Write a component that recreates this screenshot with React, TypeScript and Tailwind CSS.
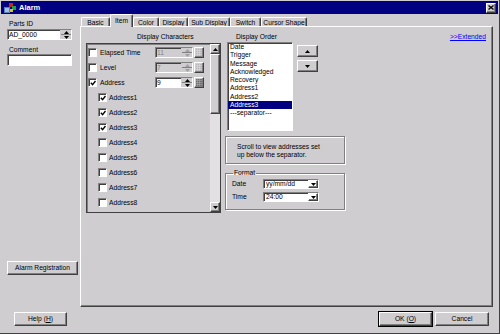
const raised =
  "border border-t-white border-l-white border-r-[#404040] border-b-[#404040] shadow-[inset_-1px_-1px_0_#808080]";
const sunken =
  "border border-t-[#808080] border-l-[#808080] border-r-white border-b-white shadow-[inset_1px_1px_0_#404040]";
const etched = "border border-[#808080] shadow-[inset_1px_1px_0_#fff,1px_1px_0_#fff]";

function Tri({ down = false, color = "#000" }: { down?: boolean; color?: string }) {
  return (
    <svg width="5" height="3" viewBox="0 0 5 3" className="block">
      <polygon points={down ? "0,0 5,0 2.5,3" : "0,3 5,3 2.5,0"} fill={color} />
    </svg>
  );
}

function Check({ on }: { on: boolean }) {
  return (
    <div className={`${sunken} w-[9px] h-[9px] bg-white flex items-center justify-center shrink-0`}>
      {on && (
        <svg width="6" height="6" viewBox="0 0 7 7" className="block">
          <path d="M1 3.2 L3 5.4 L6.4 1.2" stroke="#000" strokeWidth="1.6" fill="none" />
        </svg>
      )}
    </div>
  );
}

function Spin({ disabled = false }: { disabled?: boolean }) {
  const c = disabled ? "#a0a0a0" : "#000";
  return (
    <div className="w-[11px] h-full flex flex-col border-l border-[#cfcdd0] bg-[#cfcdd0]">
      <div className="flex-1 flex items-center justify-center border-b border-[#808080]">
        <Tri color={c} />
      </div>
      <div className="flex-1 flex items-center justify-center">
        <Tri down color={c} />
      </div>
    </div>
  );
}

function GridBtn({ disabled = false }: { disabled?: boolean }) {
  const bg = disabled ? "#b8b6b8" : "#707070";
  const ln = disabled ? "#dddbdd" : "#a8a8a8";
  return (
    <div className={`${raised} w-[10px] h-[11px] flex items-center justify-center ml-[1px]`}>
      <svg width="6" height="7" viewBox="0 0 6 7" className="block">
        <rect width="6" height="7" fill={bg} />
        {[1.5, 3.5].map((x) => (
          <line key={"v" + x} x1={x} y1="0" x2={x} y2="7" stroke={ln} strokeWidth="0.6" />
        ))}
        {[1.5, 3.5, 5.5].map((y) => (
          <line key={"h" + y} x1="0" y1={y} x2="6" y2={y} stroke={ln} strokeWidth="0.6" />
        ))}
      </svg>
    </div>
  );
}

const topRows = [
  { label: "Elapsed Time", on: false, value: "11", enabled: false },
  { label: "Level", on: false, value: "7", enabled: false },
  { label: "Address", on: true, value: "9", enabled: true },
];

const subRows: [string, boolean][] = [
  ["Address1", true],
  ["Address2", true],
  ["Address3", true],
  ["Address4", false],
  ["Address5", false],
  ["Address6", false],
  ["Address7", false],
  ["Address8", false],
];

const orderItems = [
  "Date",
  "Trigger",
  "Message",
  "Acknowledged",
  "Recovery",
  "Address1",
  "Address2",
  "Address3",
  "---separator---",
];

const tabs = [
  { name: "Basic", w: "w-[29px]" },
  { name: "Item", w: "w-[23px]" },
  { name: "Color", w: "w-[26px]" },
  { name: "Display", w: "w-[29px]" },
  { name: "Sub Display", w: "w-[42px]" },
  { name: "Switch", w: "w-[31px]" },
  { name: "Cursor Shape", w: "w-[46px]" },
];

function Combo({ value }: { value: string }) {
  return (
    <div className={`${sunken} bg-white w-[56px] h-[10px] flex items-center`}>
      <span className="pl-[2px] flex-1 leading-[8px]">{value}</span>
      <div className={`${raised} w-[10px] h-full flex items-center justify-center`}>
        <Tri down />
      </div>
    </div>
  );
}

export default function App() {
  return (
    <div className="w-[500px] h-[334px] bg-[#cfcdd0] overflow-hidden border-b border-r border-[#404040] font-['Liberation_Sans',Arial,sans-serif] text-[6.7px] leading-[8px] text-black flex flex-col">
      {/* ── title bar ── */}
      <div className="mx-[1px] mt-[1px] h-[13px] bg-[#000080] flex items-center shrink-0">
        <svg width="12" height="11" viewBox="0 0 12 11" className="ml-[3px] block">
          <rect x="0" y="5" width="6" height="6" fill="#5a7fb8" />
          <rect x="1" y="6" width="4" height="4" fill="#9fc0e8" />
          <rect x="5" y="1" width="4" height="4" fill="#d02020" />
          <rect x="8" y="4" width="4" height="4" fill="#20a040" />
          <rect x="6" y="7" width="3" height="3" fill="#e0c020" />
        </svg>
        <span className="ml-[3px] text-white font-bold text-[7.5px]">Alarm</span>
        <div className={`${raised} ml-auto mr-[2px] w-[10px] h-[10px] bg-[#cfcdd0] flex items-center justify-center`}>
          <svg width="6" height="5" viewBox="0 0 6 5" className="block">
            <path d="M0.5 0.5 L5.5 4.5 M5.5 0.5 L0.5 4.5" stroke="#000" strokeWidth="1.3" />
          </svg>
        </div>
      </div>

      {/* ── body ── */}
      <div className="flex h-[293px] shrink-0">
        {/* left column */}
        <div className="w-[80px] flex flex-col">
          <div className="pl-[9px] pt-[6px]">Parts ID</div>
          <div className={`${sunken} bg-white ml-[7px] mt-[1px] w-[65px] h-[11px] flex items-center`}>
            <span className="pl-[1px] flex-1">AD_0000</span>
            <Spin />
          </div>
          <div className="pl-[9px] mt-[6px]">Comment</div>
          <div className={`${sunken} bg-white ml-[7px] w-[65px] h-[12px]`} />
          <div className={`${raised} ml-[7px] mt-[195px] w-[71px] h-[14px] flex items-center justify-center`}>
            Alarm Registration
          </div>
        </div>

        {/* tab control */}
        <div className="w-[413px] flex flex-col">
          <div className="flex items-end h-[12px] pl-[1px]">
            {tabs.map((t) => {
              const sel = t.name === "Item";
              return (
                <div
                  key={t.name}
                  className={`${t.w} border-t border-l border-white border-r border-r-[#404040] shadow-[inset_-1px_0_0_#808080] rounded-t-[2px] bg-[#cfcdd0] flex justify-center ${
                    sel ? "h-[13px] -mb-px relative z-10 pt-[2px]" : "h-[9px] pt-px"
                  }`}
                >
                  {t.name}
                </div>
              );
            })}
          </div>
          <div className="h-[281px] border border-t-white border-l-white border-r-[#404040] border-b-[#404040] shadow-[inset_-1px_-1px_0_#808080] flex pl-[5px]">
            {/* display characters */}
            <div className="w-[135px] flex flex-col">
              <div className="pt-[6px] pl-[51px]">Display Characters</div>
              <div className="mt-[2px] h-[170px] border border-[#404040] shadow-[inset_1px_1px_0_#808080] flex">
                <div className="flex-1 pt-px">
                  {topRows.map((r) => (
                    <div key={r.label} className="h-[15px] flex items-center pl-[1px]">
                      <Check on={r.on} />
                      <span className="ml-[3px] w-[55px]">{r.label}</span>
                      <div
                        className={`${sunken} w-[38px] h-[11px] flex items-center ${
                          r.enabled ? "bg-white" : "bg-[#cfcdd0] text-[#808080]"
                        }`}
                      >
                        <span className="pl-px flex-1">{r.value}</span>
                        <Spin disabled={!r.enabled} />
                      </div>
                      <GridBtn disabled={!r.enabled} />
                    </div>
                  ))}
                  {subRows.map(([label, on]) => (
                    <div key={label} className="h-[15px] flex items-center pl-[11px]">
                      <Check on={on} />
                      <span className="ml-[2px]">{label}</span>
                    </div>
                  ))}
                </div>
                <div className="w-[10px] flex flex-col">
                  <div className={`${raised} h-[10px] flex items-center justify-center`}>
                    <Tri />
                  </div>
                  <div className={`${raised} h-[60px]`} />
                  <div className="flex-1 bg-[#e2e0e3]" />
                  <div className={`${raised} h-[10px] flex items-center justify-center`}>
                    <Tri down />
                  </div>
                </div>
              </div>
            </div>

            {/* display order */}
            <div className="w-[120px] ml-[4px] flex flex-col">
              <div className="pt-[6px] pl-[11px]">Display Order</div>
              <div className="flex mt-px">
                <div className={`${sunken} bg-white ml-[2px] w-[66px] h-[89px] leading-[8.25px]`}>
                  {orderItems.map((t) => (
                    <div key={t} className={`pl-[2px] ${t === "Address3" ? "bg-[#000080] text-white" : ""}`}>
                      {t}
                    </div>
                  ))}
                </div>
                <div className="ml-[4px] mt-[3px] flex flex-col gap-[3px]">
                  <div className={`${raised} w-[21px] h-[12px] flex items-center justify-center`}>
                    <Tri />
                  </div>
                  <div className={`${raised} w-[21px] h-[12px] flex items-center justify-center`}>
                    <Tri down />
                  </div>
                </div>
              </div>
              <div className={`${etched} mt-[5px] h-[28px] pl-[11px] pt-[6px]`}>
                Scroll to view addresses set
                <br />
                up below the separator.
              </div>
              <fieldset className={`${etched} mt-[5px] px-[6px] pb-[7px]`}>
                <legend className="ml-[1px] px-px">Format</legend>
                <div className="flex items-center mt-[2px]">
                  <span className="w-[31px]">Date</span>
                  <Combo value="yy/mm/dd" />
                </div>
                <div className="flex items-center mt-[3px]">
                  <span className="w-[31px]">Time</span>
                  <Combo value="24:00" />
                </div>
              </fieldset>
            </div>

            <div className="ml-auto mr-[6px] pt-[6px]">
              <span className="text-[#0000ff] underline">&gt;&gt;Extended</span>
            </div>
          </div>
        </div>
      </div>

      {/* ── bottom buttons ── */}
      <div className="flex items-start pt-[5px]">
        <div className={`${raised} ml-[14px] w-[53px] h-[14px] flex items-center justify-center`}>
          <span>
            Help (<span className="underline">H</span>)
          </span>
        </div>
        <div className={`${raised} ml-auto w-[53px] h-[14px] flex items-center justify-center outline outline-1 outline-black`}>
          <span>
            OK (<span className="underline">O</span>)
          </span>
        </div>
        <div className={`${raised} ml-[3px] mr-[10px] w-[54px] h-[14px] flex items-center justify-center`}>
          Cancel
        </div>
      </div>
    </div>
  );
}
